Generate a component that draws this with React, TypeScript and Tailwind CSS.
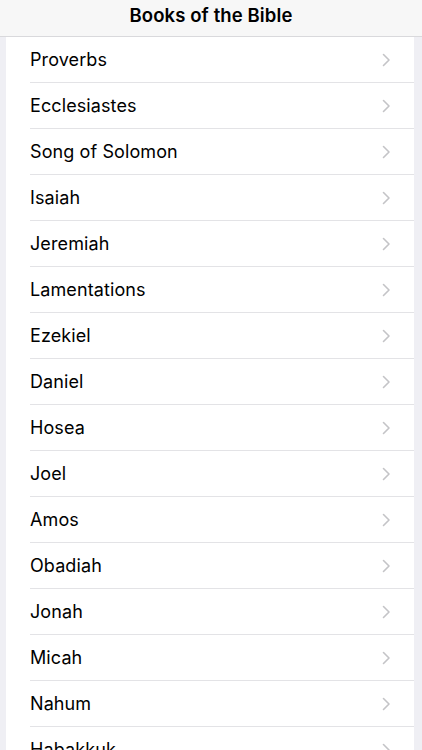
import React from "react";

const books = [
  "Proverbs",
  "Ecclesiastes",
  "Song of Solomon",
  "Isaiah",
  "Jeremiah",
  "Lamentations",
  "Ezekiel",
  "Daniel",
  "Hosea",
  "Joel",
  "Amos",
  "Obadiah",
  "Jonah",
  "Micah",
  "Nahum",
  "Habakkuk",
  "Zephaniah",
];

function Chevron() {
  return (
    <svg width="9" height="14" viewBox="0 0 9 14" fill="none">
      <path d="M1.5 1.5 L7 7 L1.5 12.5" stroke="#c4c4c7" strokeWidth="1.6" strokeLinecap="round" strokeLinejoin="round" />
    </svg>
  );
}

export default function App() {
  return (
    <div
      className="w-[422px] h-[750px] overflow-hidden bg-[#efeff4] flex flex-col"
      style={{ fontFamily: 'Inter, "Noto Sans", "Liberation Sans", sans-serif' }}
    >
      <div className="h-[37px] shrink-0 bg-[#f7f7f7] border-b border-[#d9d9dc] flex items-center justify-center pb-[4px]">
        <span className="text-[18.5px] font-semibold text-black tracking-[0.1px]">Books of the Bible</span>
      </div>
      <div className="ml-[6px] mr-[8px] bg-white flex flex-col">
        {books.map((b) => (
          <div key={b} className="h-[46px] shrink-0 pl-[24px] flex">
            <div className="flex-1 flex items-center justify-between pr-[23px] border-b border-[#e3e3e6]">
              <span className="text-[18px] text-black tracking-[0.1px]">{b}</span>
              <Chevron />
            </div>
          </div>
        ))}
      </div>
    </div>
  );
}
